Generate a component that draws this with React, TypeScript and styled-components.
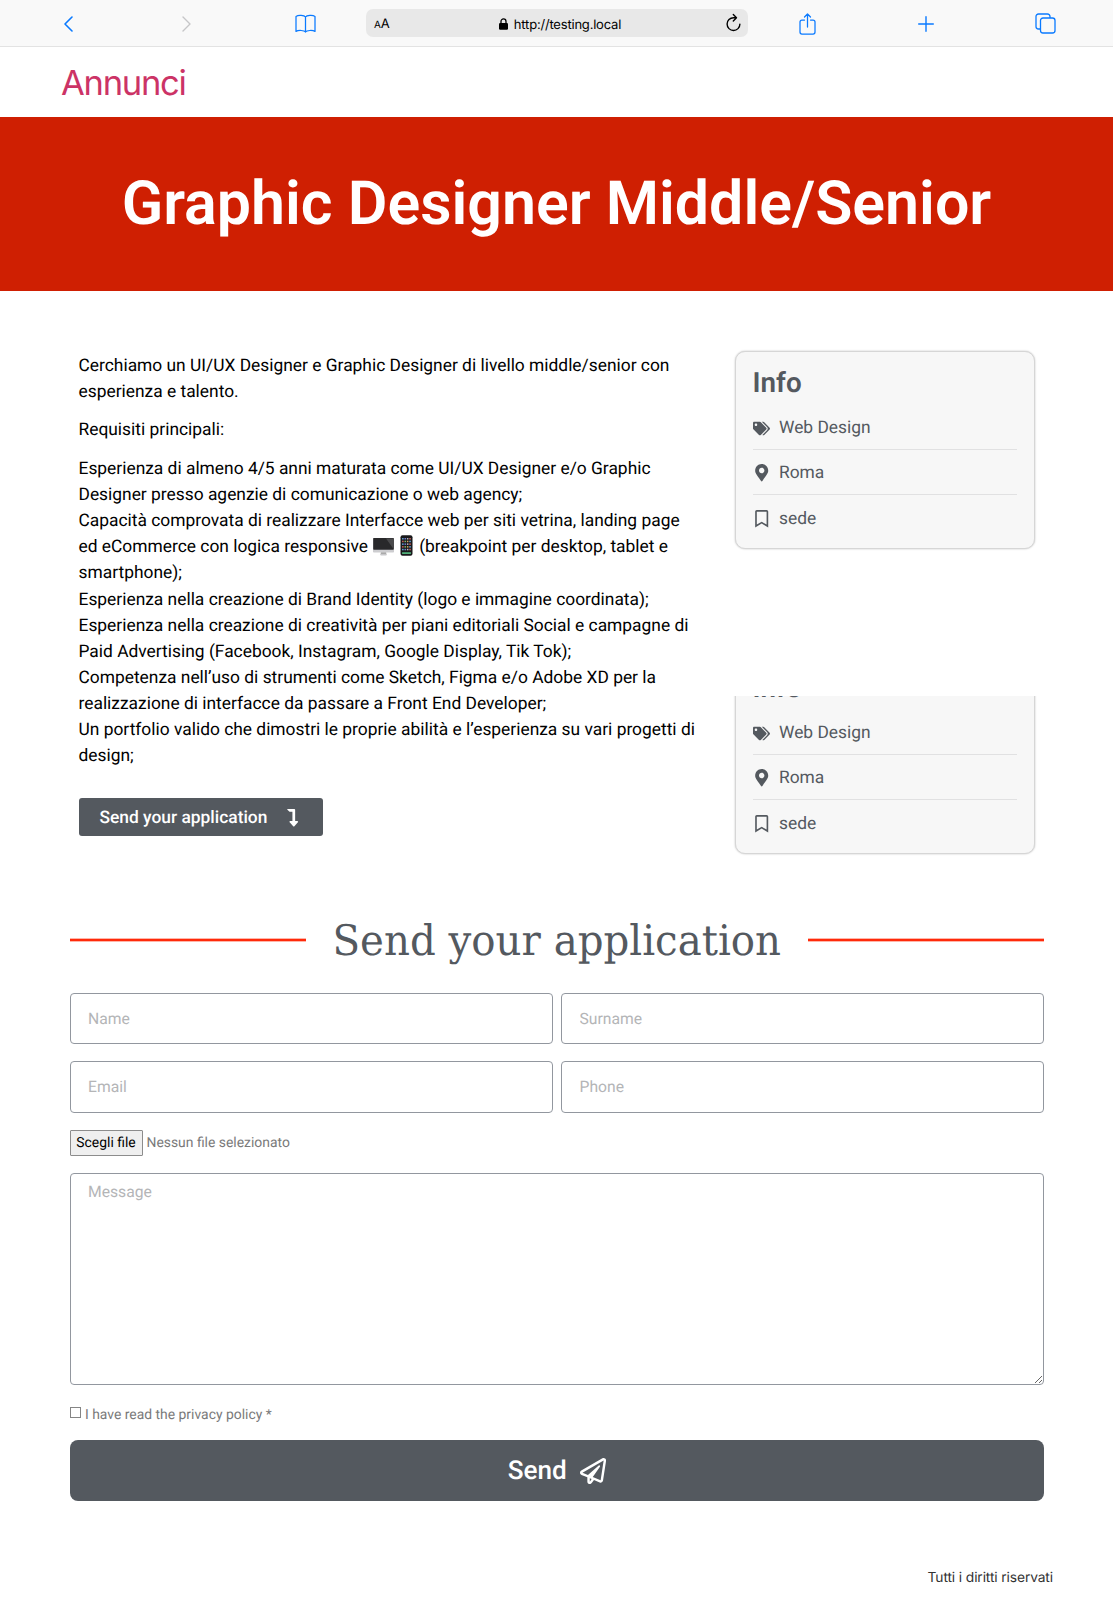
import React from "react";
import styled, { createGlobalStyle } from "styled-components";
import { FaTags, FaMapMarkerAlt, FaRegBookmark, FaLevelDownAlt, FaRegPaperPlane } from "react-icons/fa";

const slate = "#54595f";
const blue = "#0a7aff";

const GlobalStyle = createGlobalStyle`
  *, *::before, *::after { box-sizing: border-box; }
  html, body { margin: 0; padding: 0; background: #fff; }
  body {
    font-family: Roboto, "Liberation Sans", sans-serif;
    color: #000;
    text-rendering: geometricPrecision;
  }
  h1, h2, h3, p, ul { margin: 0; padding: 0; font-weight: inherit; }
  button, input, textarea { font-family: inherit; text-rendering: inherit; }
`;

const Page = styled.div`
  width: 1113px;
  height: 1602px;
  overflow: hidden;
  display: flex;
  flex-direction: column;
`;

const BrowserBar = styled.nav`
  height: 47px;
  flex: none;
  background: #f9f9f9;
  border-bottom: 1px solid #e3e3e3;
  display: grid;
  grid-template-columns: 127.5px 118px 120.5px 382px 119px 118px 1fr;
  align-items: center;
  font-family: Inter, sans-serif;
`;

const BarButton = styled.button<{ $inset: number; $muted?: boolean }>`
  border: 0;
  background: none;
  padding: 1px 0 0 ${(p) => p.$inset}px;
  display: flex;
  align-items: center;
  color: ${(p) => (p.$muted ? "#c6c6c8" : blue)};
`;

const AddressField = styled.div`
  height: 28px;
  border-radius: 7px;
  background: #e8e8e8;
  display: grid;
  grid-template-columns: 60px 1fr 60px;
  align-items: center;
  padding: 0 7px 0 8px;
`;

const TextSize = styled.span`
  font-size: 10px;
  line-height: 14px;
  letter-spacing: -0.2px;
  padding-top: 3px;
  b { font-weight: 400; font-size: 13px; }
`;

const Address = styled.span`
  display: flex;
  align-items: center;
  justify-content: center;
  gap: 6px;
  padding: 3px 0 0 5px;
  font-size: 13px;
  letter-spacing: -0.2px;
  white-space: nowrap;
  svg { margin-bottom: 1px; }
`;

const Reload = styled.span`
  justify-self: end;
  display: flex;
`;

const SiteHeader = styled.header`
  height: 69.6px;
  flex: none;
  padding: 16px 0 0 61px;
`;

const SiteTitle = styled.h1`
  font-family: Inter, sans-serif;
  font-size: 34.5px;
  line-height: 42px;
  letter-spacing: -1.25px;
  color: #cc3366;
`;

const Banner = styled.section`
  height: 174.2px;
  flex: none;
  background: #cf1f02;
  display: flex;
  align-items: center;
  justify-content: center;
  color: #fff;
`;

const BannerTitle = styled.h2`
  font-size: 60.9px;
  font-weight: 600;
  line-height: 61px;
  white-space: nowrap;
`;

const Columns = styled.main`
  flex: none;
  height: 615px;
  padding: 60.2px 78.5px 0;
  display: grid;
  grid-template-columns: 1fr 300px;
`;

const Description = styled.article`
  padding-top: 1.8px;
  font-size: 17.39px;
  line-height: 26.09px;
  white-space: nowrap;
  p { margin-bottom: 12.5px; }
`;

const EmojiIcon = styled.svg<{ $before?: number; $after: number }>`
  display: inline-block;
  width: 21px;
  height: 21px;
  margin: -2px ${(p) => p.$after}px 0 ${(p) => p.$before ?? 0}px;
  vertical-align: -4px;
`;

const JumpButton = styled.button`
  margin-top: 28.9px;
  width: 244px;
  height: 38.4px;
  border: 0;
  border-radius: 3px;
  background: ${slate};
  color: #fff;
  font-size: 17.39px;
  font-weight: 500;
  padding: 1.5px 21px 0;
  display: flex;
  align-items: center;
  justify-content: space-between;
`;

const Sidebar = styled.aside`
  display: flex;
  flex-direction: column;
`;

const CardWindow = styled.div<{ $cut: number; $space: number }>`
  margin: ${(p) => p.$space}px -4px 0;
  padding: 0 4px 4px;
  overflow: ${(p) => (p.$cut ? "hidden" : "visible")};
  > section { margin-top: -${(p) => p.$cut}px; }
`;

const Card = styled.section`
  height: 198.5px;
  border: 1px solid #d6d6d6;
  border-radius: 10px;
  background: #f7f7f7;
  box-shadow: 0 0 2px rgba(0, 0, 0, 0.25);
  padding: 16.4px 17px 0;
  color: ${slate};
`;

const CardTitle = styled.h3`
  font-size: 27.8px;
  font-weight: 600;
  line-height: 30px;
  margin-bottom: 13.6px;
`;

const Facts = styled.ul`
  list-style: none;
`;

const Fact = styled.li`
  height: 45.3px;
  display: grid;
  grid-template-columns: 17.5px 1fr;
  column-gap: 9px;
  align-items: center;
  padding-top: 2px;
  font-size: 17.39px;
  border-bottom: 1px solid #e1e1e2;
  &:first-child { height: 38px; padding: 0 0 4.5px; }
  &:last-child { border-bottom: 0; }
  svg { justify-self: center; }
`;

const Application = styled.section`
  flex: none;
  margin: 0 69px 0 69.5px;
  display: flex;
  flex-direction: column;
`;

const Divider = styled.div`
  display: grid;
  grid-template-columns: 236.5px 1fr 236.5px;
  align-items: center;
  height: 70px;
  &::before, &::after {
    content: "";
    height: 4px;
    margin-bottom: 2px;
    background: #ff2a0a;
    background-clip: padding-box;
    border: solid rgba(255, 42, 10, 0.35);
    border-width: 1px 0;
  }
`;

const DividerTitle = styled.h2`
  font-family: "Roboto Slab", "DejaVu Serif", serif;
  font-size: 42px;
  line-height: 52px;
  color: ${slate};
  display: flex;
  justify-content: center;
  white-space: nowrap;
  transform: scaleX(0.96);
  padding-top: 1px;
`;

const Fields = styled.form`
  display: grid;
  grid-template-columns: 1fr 1fr;
  column-gap: 8.5px;
  row-gap: 17.4px;
  padding-top: 17px;
`;

const TextInput = styled.input`
  min-width: 0;
  height: 51.2px;
  border: 1px solid #92979f;
  border-radius: 4px;
  padding: 0 17.5px;
  font-size: 15.7px;
  &::placeholder { color: #b4b5b7; opacity: 1; }
`;

const FileRow = styled.div`
  grid-column: 1 / -1;
  display: flex;
  align-items: center;
  gap: 4px;
  height: 26px;
  font-size: 13.9px;
  color: #7a7a7a;
`;

const FileButton = styled.button`
  width: 73px;
  height: 26px;
  padding: 0;
  border: 1px solid #8c8c8c;
  border-radius: 1px;
  background: #efefef;
  color: #000;
  font-size: 13.9px;
  white-space: nowrap;
`;

const MessageInput = styled.textarea`
  grid-column: 1 / -1;
  height: 211.2px;
  border: 1px solid #92979f;
  border-radius: 4px;
  padding: 5.5px 17.5px;
  font-size: 15.7px;
  line-height: 24px;
  resize: vertical;
  &::placeholder { color: #b4b5b7; opacity: 1; }
`;

const Consent = styled.label`
  grid-column: 1 / -1;
  height: 21px;
  display: flex;
  align-items: center;
  gap: 4px;
  padding-top: 5px;
  font-size: 13.9px;
  color: #7a7a7a;
`;

const CheckBox = styled.input`
  appearance: none;
  width: 11px;
  height: 11px;
  margin: 0 0 4px 0.5px;
  border: 1px solid #858585;
  background: #fff;
`;

const SendButton = styled.button`
  grid-column: 1 / -1;
  height: 61px;
  border: 0;
  border-radius: 8px;
  background: ${slate};
  color: #fff;
  font-size: 26.1px;
  font-weight: 500;
  display: flex;
  align-items: center;
  justify-content: center;
  gap: 13px;
`;

const Footer = styled.footer`
  flex: none;
  margin-top: 67px;
  padding-right: 60px;
  text-align: right;
  font-family: Inter, sans-serif;
  font-size: 13.8px;
  line-height: 20px;
  letter-spacing: -0.12px;
  color: #333;
`;

const Stroke = (p: { w: number; h: number; d: string; sw?: number }) => (
  <svg width={p.w} height={p.h} viewBox={`0 0 ${p.w} ${p.h}`} fill="none" stroke="currentColor"
    strokeWidth={p.sw ?? 1.4} strokeLinecap="round" strokeLinejoin="round">
    <path d={p.d} />
  </svg>
);

const Desktop = () => (
  <EmojiIcon viewBox="0 0 21 21" $before={0.7} $after={2.2}>
    <path d="M8 16h5l.5 4h-6z" fill="#aaa" />
    <rect x="0" y="3" width="21" height="14.5" rx=".8" fill="#cdcdd0" />
    <rect x=".2" y="3" width="20.6" height="11.7" rx=".6" fill="#29292b" />
    <path d="M13 3.6h7.2v9.8z" fill="#4a4a4c" />
    <rect x="7.5" y="19" width="6" height="1.4" rx=".5" fill="#c8c8cb" />
  </EmojiIcon>
);

const phoneColors = ["#66a9dd", "#d9a45c", "#77b86d", "#d2655e", "#b7b7c4", "#6d78d1"];

const Phone = () => (
  <EmojiIcon viewBox="0 0 21 21" $after={-2.4}>
    <rect x="4.5" y=".3" width="12" height="20.4" rx="2" fill="#19191b" />
    {Array.from({ length: 20 }, (_, i) => (
      <rect key={i} x={6.1 + (i % 4) * 2.4} y={3 + Math.floor(i / 4) * 2.7} width="1.5" height="1.5"
        fill={phoneColors[(i * 5 + Math.floor(i / 4)) % 6]} />
    ))}
    <rect x="6.1" y="17.2" width="8.8" height="1.8" fill="#4fae78" />
  </EmojiIcon>
);

const InfoCard = () => (
  <Card>
    <CardTitle>Info</CardTitle>
    <Facts>
      <Fact><FaTags size={17} />Web Design</Fact>
      <Fact><FaMapMarkerAlt size={17.4} />Roma</Fact>
      <Fact><FaRegBookmark size={17.4} />sede</Fact>
    </Facts>
  </Card>
);

export default function App() {
  return (
    <>
      <GlobalStyle />
      <Page>
        <BrowserBar>
          <BarButton $inset={64} aria-label="Back">
            <Stroke w={9} h={16} d="M8 1 1 8l7 7" sw={1.6} />
          </BarButton>
          <BarButton $inset={54.5} $muted aria-label="Forward">
            <Stroke w={9} h={16} d="m1 1 7 7-7 7" />
          </BarButton>
          <BarButton $inset={49.5} aria-label="Bookmarks">
            <Stroke w={21} h={19} sw={1.25}
              d="M10.5 3C9.3 1.3 3.4.8 1 2.4v15c2.3-1.4 8.3-1.2 9.5.6 1.2-1.8 7.2-2 9.5-.6v-15C17.6.8 11.7 1.3 10.5 3v15" />
          </BarButton>
          <AddressField>
            <TextSize>A<b>A</b></TextSize>
            <Address>
              <svg width="9" height="12" viewBox="0 0 9 12">
                <rect x="0" y="5" width="9" height="6.8" rx="1.2" />
                <path d="M2 5.5V3.4a2.5 2.5 0 0 1 5 0v2.1" fill="none" stroke="#000" strokeWidth="1.3" />
              </svg>
              http://testing.local
            </Address>
            <Reload>
              <Stroke w={15} h={20} sw={1.4} d="M7.5 4.7a6.4 6.4 0 1 0 6.4 6.4M7.5 4.7h2.5M7.3 1.5l3.2 3.2-3.2 3.2" />
            </Reload>
          </AddressField>
          <BarButton $inset={51} aria-label="Share">
            <Stroke w={17} h={22} sw={1.25}
              d="M5.5 7H3a2 2 0 0 0-2 2v10a2 2 0 0 0 2 2h11a2 2 0 0 0 2-2V9a2 2 0 0 0-2-2h-2.5M8.5 14V1M5.5 4l3-3 3 3" />
          </BarButton>
          <BarButton $inset={51} aria-label="New tab">
            <Stroke w={16} h={16} d="M8 .7v14.6M.7 8h14.6" />
          </BarButton>
          <BarButton $inset={49.5} aria-label="Tabs">
            <Stroke w={21} h={21} sw={1.3}
              d="M5.5 16H3.5a2.5 2.5 0 0 1-2.5-2.5v-10A2.5 2.5 0 0 1 3.5 1h9A2.5 2.5 0 0 1 15 3.5v1.5M8 5h9.5A2.5 2.5 0 0 1 20 7.5v10a2.5 2.5 0 0 1-2.5 2.5H8a2.5 2.5 0 0 1-2.5-2.5v-10A2.5 2.5 0 0 1 8 5" />
          </BarButton>
        </BrowserBar>

        <SiteHeader><SiteTitle>Annunci</SiteTitle></SiteHeader>
        <Banner><BannerTitle>Graphic Designer Middle/Senior</BannerTitle></Banner>

        <Columns>
          <Description>
            <p>
              Cerchiamo un UI/UX Designer e Graphic Designer di livello middle/senior con<br />
              esperienza e talento.
            </p>
            <p>Requisiti principali:</p>
            <p>
              Esperienza di almeno 4/5 anni maturata come UI/UX Designer e/o Graphic<br />
              Designer presso agenzie di comunicazione o web agency;<br />
              Capacità comprovata di realizzare Interfacce web per siti vetrina, landing page<br />
              ed eCommerce con logica responsive <Desktop /><Phone /> (breakpoint per desktop, tablet e<br />
              smartphone);<br />
              Esperienza nella creazione di Brand Identity (logo e immagine coordinata);<br />
              Esperienza nella creazione di creatività per piani editoriali Social e campagne di<br />
              Paid Advertising (Facebook, Instagram, Google Display, Tik Tok);<br />
              Competenza nell’uso di strumenti come Sketch, Figma e/o Adobe XD per la<br />
              realizzazione di interfacce da passare a Front End Developer;<br />
              Un portfolio valido che dimostri le proprie abilità e l’esperienza su vari progetti di<br />
              design;
            </p>
            <JumpButton>Send your application<FaLevelDownAlt size={17.4} /></JumpButton>
          </Description>
          <Sidebar>
            <CardWindow $cut={0} $space={0}><InfoCard /></CardWindow>
            <CardWindow $cut={40.5} $space={143}><InfoCard /></CardWindow>
          </Sidebar>
        </Columns>

        <Application>
          <Divider><DividerTitle>Send your application</DividerTitle></Divider>
          <Fields>
            <TextInput placeholder="Name" />
            <TextInput placeholder="Surname" />
            <TextInput placeholder="Email" />
            <TextInput placeholder="Phone" />
            <FileRow><FileButton type="button">Scegli file</FileButton>Nessun file selezionato</FileRow>
            <MessageInput placeholder="Message" />
            <Consent><CheckBox type="checkbox" />I have read the privacy policy *</Consent>
            <SendButton type="button">Send<FaRegPaperPlane size={26.1} /></SendButton>
          </Fields>
        </Application>

        <Footer>Tutti i diritti riservati</Footer>
      </Page>
    </>
  );
}
